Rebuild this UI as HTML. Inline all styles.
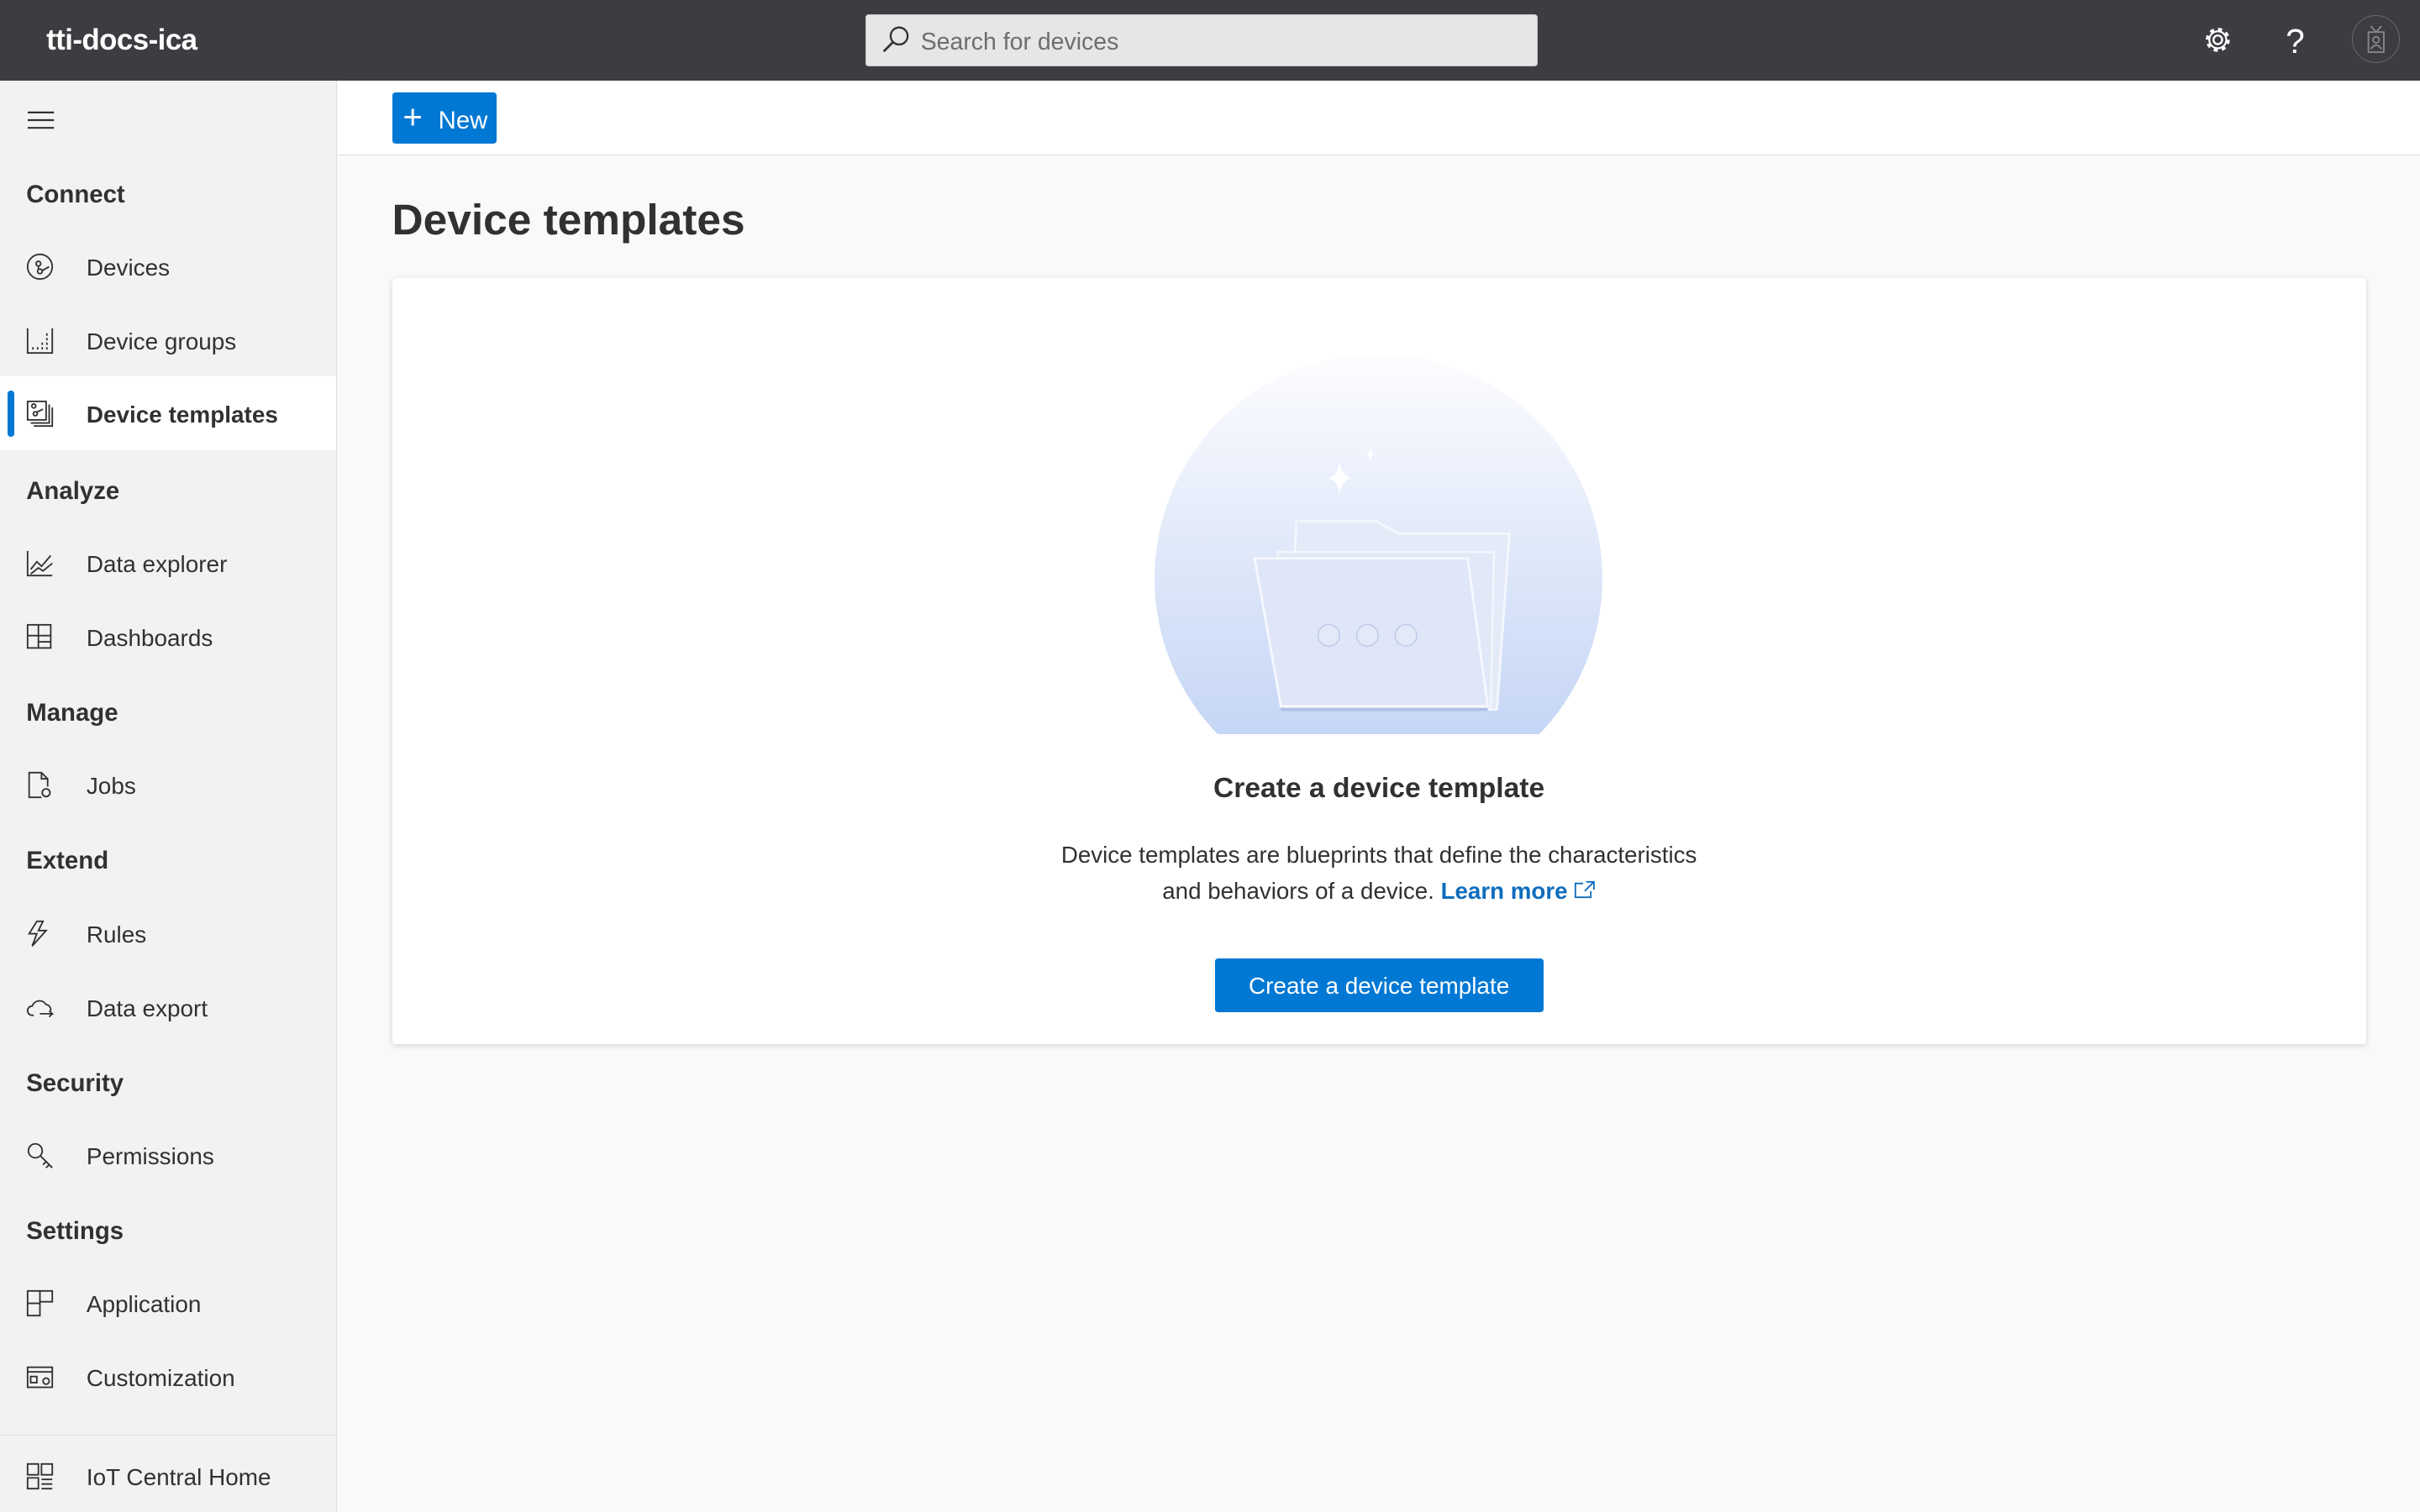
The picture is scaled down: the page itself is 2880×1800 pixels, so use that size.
<!DOCTYPE html>
<html><head><meta charset="utf-8"><style>
html,body{margin:0;padding:0;width:2880px;height:1800px;overflow:hidden;background:#faf9f8}
#w{zoom:1.836735;width:1568px;height:980px;position:relative;font-family:"Liberation Sans",sans-serif;color:#323130}
.top{position:absolute;left:0;top:0;width:1568px;height:52px;background:#3d3c41}
.brand{position:absolute;left:30px;top:15px;color:#fff;font-weight:bold;font-size:19px;letter-spacing:-0.3px}
.search{position:absolute;left:561px;top:9px;width:434px;height:33px;background:#e6e6e6;border:1px solid #c8c8c8;border-radius:2px}
.search span{position:absolute;left:35px;top:9px;color:#6e6e6e;font-size:15.5px}
.side{position:absolute;left:0;top:52px;width:218px;height:928px;background:#f3f2f1;border-right:1px solid #e1dfdd}
.item{position:absolute;left:0;width:218px;height:48px;font-size:15.2px}
.item .t{position:absolute;left:56px;top:16px}
.item svg{position:absolute;left:17px;top:15px}
.hd{position:absolute;left:17px;font-weight:bold;font-size:16px}
.sel{background:#fff}
.sel .t{font-weight:bold}
.bar{position:absolute;left:5px;top:9px;width:4px;height:30px;background:#0078d4;border-radius:2px}
.cmd{position:absolute;left:219px;top:52px;width:1349px;height:48px;background:#fff;border-bottom:1px solid #e1dfdd}
.btn{position:absolute;left:35px;top:8px;width:68px;height:33px;background:#0078d4;border-radius:2px;color:#fff;font-size:16px}
h1{position:absolute;left:254px;top:126px;margin:0;font-size:28px;font-weight:bold}
.card{position:absolute;left:254px;top:180px;width:1279px;height:497px;background:#fff;box-shadow:0 1px 4px rgba(0,0,0,.15);border-radius:2px}
.blue{position:absolute;left:787px;top:621px;width:213px;height:35px;background:#0078d4;border-radius:2px;color:#fff;font-size:15.2px;text-align:center;line-height:36px}
</style></head><body><div id="w">
<div class="top">
<div class="brand">tti-docs-ica</div>
<div class="search"><svg style="position:absolute;left:9px;top:7px" width="20" height="20" viewBox="0 0 20 20"><circle cx="12" cy="7" r="5.5" fill="none" stroke="#333" stroke-width="1.3"/><path d="M8 11L2 17" stroke="#333" stroke-width="1.5"/></svg><span>Search for devices</span></div>
<svg style="position:absolute;left:1427px;top:16px" width="20" height="20" viewBox="0 0 20 20"><circle cx="10" cy="10" r="2.8" fill="none" stroke="#fff" stroke-width="1.3"/><circle cx="10" cy="10" r="6.5" fill="none" stroke="#fff" stroke-width="2.6" stroke-dasharray="2.5 2.6"/><circle cx="10" cy="10" r="5.5" fill="none" stroke="#fff" stroke-width="1.2"/></svg>
<div style="position:absolute;left:1481px;top:14px;color:#fff;font-size:22px">?</div>
<div style="position:absolute;left:1524px;top:10px;width:30px;height:30px;border:1px solid #6a6a6e;border-radius:50%"></div>
<svg style="position:absolute;left:1532px;top:16px" width="16" height="20" viewBox="0 0 16 20"><rect x="2.5" y="5" width="10" height="13" fill="none" stroke="#888" stroke-width="1"/><circle cx="7.5" cy="10" r="2" fill="none" stroke="#888"/><path d="M4 16q3.5-5 7 0M4 1l3.5 4l3.5-4" fill="none" stroke="#888"/></svg>
</div>
<div class="side">
<svg style="position:absolute;left:18px;top:20px" width="18" height="12"><path d="M0 1H17M0 6H17M0 11H17" stroke="#323130" stroke-width="1.2"/></svg>
<div class="hd" style="top:65px">Connect</div>
<div class="item" style="top:97px"><svg width="18" height="18" viewBox="0 0 18 18" fill="none" stroke="#323130"><circle cx="9" cy="9" r="8"/><circle cx="8" cy="7" r="1.5"/><circle cx="9" cy="12" r="1.5"/><path d="M10.5 11.5L15 9M8 8.5v2"/></svg><span class="t">Devices</span></div>
<div class="item" style="top:145px"><svg width="18" height="18" viewBox="0 0 18 18" fill="none" stroke="#323130"><path d="M1 1v16h16V1"/><path d="M4 14h1M7 14h1M10 14h1M13 14h1M10 11h1M13 11h1M13 8h1M13 5h1" stroke-width="1.6"/></svg><span class="t">Device groups</span></div>
<div class="item sel" style="top:192px"><div class="bar"></div><svg width="18" height="18" viewBox="0 0 18 18" fill="none" stroke="#323130"><rect x="1" y="1" width="12" height="12"/><path d="M3 15h12V3M5 17h12V5"/><circle cx="5" cy="4" r="1.3"/><circle cx="6" cy="9" r="1.3"/><path d="M7 8l4-2"/></svg><span class="t">Device templates</span></div>
<div class="hd" style="top:257px">Analyze</div>
<div class="item" style="top:289px"><svg width="18" height="18" viewBox="0 0 18 18" fill="none" stroke="#323130"><path d="M1 1v16h16"/><path d="M3 13l4-5 3 3 6-7M3 16l5-4 3 2 6-5"/></svg><span class="t">Data explorer</span></div>
<div class="item" style="top:337px"><svg width="18" height="18" viewBox="0 0 18 18" fill="none" stroke="#323130"><rect x="1" y="1" width="15" height="15"/><path d="M8 1v15M1 8h15M8 12h8"/></svg><span class="t">Dashboards</span></div>
<div class="hd" style="top:401px">Manage</div>
<div class="item" style="top:433px"><svg width="18" height="18" viewBox="0 0 18 18" fill="none" stroke="#323130"><path d="M10 17H2V1h8l4 4v5M10 1v4h4"/><circle cx="13" cy="14" r="2.5"/></svg><span class="t">Jobs</span></div>
<div class="hd" style="top:497px">Extend</div>
<div class="item" style="top:529px"><svg width="18" height="18" viewBox="0 0 18 18" fill="none" stroke="#323130"><path d="M7 1L2 9h5l-3 8 9-10H8l3-6z"/></svg><span class="t">Rules</span></div>
<div class="item" style="top:577px"><svg width="18" height="18" viewBox="0 0 18 18" fill="none" stroke="#323130"><path d="M5 14H4a3 3 0 010-6 5 5 0 019-1 3.5 3.5 0 013 4M9 13h8l-2-2M17 13l-2 2"/></svg><span class="t">Data export</span></div>
<div class="hd" style="top:641px">Security</div>
<div class="item" style="top:673px"><svg width="18" height="18" viewBox="0 0 18 18" fill="none" stroke="#323130"><circle cx="6" cy="6" r="4.5"/><path d="M9 9l8 8M13 13l-2 2M15 15l-2 2"/></svg><span class="t">Permissions</span></div>
<div class="hd" style="top:737px">Settings</div>
<div class="item" style="top:769px"><svg width="18" height="18" viewBox="0 0 18 18" fill="none" stroke="#323130"><path d="M1 1h16v7H9v9H1zM9 1v7M1 9h8"/></svg><span class="t">Application</span></div>
<div class="item" style="top:817px"><svg width="18" height="18" viewBox="0 0 18 18" fill="none" stroke="#323130"><rect x="1" y="2" width="16" height="13"/><path d="M1 5h16"/><rect x="3" y="8" width="4" height="4"/><circle cx="13" cy="11" r="2"/></svg><span class="t">Customization</span></div>
<div style="position:absolute;left:0;top:878px;width:218px;border-top:1px solid #e1dfdd"></div>
<div class="item" style="top:881px"><svg width="18" height="18" viewBox="0 0 18 18" fill="none" stroke="#323130"><path d="M1 1h7v7H1zM1 10h7v7H1zM10 1h7v7h-7zM10 11h7M10 14h7M10 17h7"/></svg><span class="t">IoT Central Home</span></div>
</div>
<div class="cmd"><div class="btn"><span style="position:absolute;left:7px;top:3px;font-size:22px;font-weight:300">+</span><span style="position:absolute;left:30px;top:9px">New</span></div></div>
<h1>Device templates</h1>
<div class="card">
<div style="position:absolute;left:494px;top:50px;width:290px;height:246px;overflow:hidden"><div style="width:290px;height:290px;border-radius:50%;background:linear-gradient(#fdfdff,#dfe8f9 45%,#bccff4)"></div></div>
<svg style="position:absolute;left:554px;top:100px" width="180" height="190" viewBox="0 0 180 190">
<polygon points="32,58 84,58 98,66 170,66 162,180 26,180" fill="#e3eaf8" stroke="#f4f7fd" stroke-width="1.5"/>
<polygon points="20,78 160,78 158,180 26,180" fill="#e1e8f8" stroke="#f4f7fd" stroke-width="1.5" opacity=".9"/>
<polygon points="5,82 143,82 156,178 22,178" fill="#dfe6f7" stroke="#f6f8fe" stroke-width="1.5"/>
<path d="M22 180h134" stroke="#aebfe3" stroke-width="2"/>
<circle cx="53" cy="132" r="7" fill="#e3e9f7" stroke="#c3cfea"/><circle cx="78" cy="132" r="7" fill="#e3e9f7" stroke="#c3cfea"/><circle cx="103" cy="132" r="7" fill="#e3e9f7" stroke="#c3cfea"/>
<path d="M60 19q1 10 8 11q-7 1-8 11q-1-10-8-11q7-1 8-11z" fill="#fff"/>
<path d="M80 10q.5 4 3 4.5q-2.5.5-3 4.5q-.5-4-3-4.5q2.5-.5 3-4.5z" fill="#fff"/>
</svg>
<div style="position:absolute;left:0;width:1279px;top:321px;text-align:center;font-weight:bold;font-size:18.3px">Create a device template</div>
<div style="position:absolute;left:0;width:1279px;top:363px;text-align:center;font-size:15.1px;line-height:23px">Device templates are blueprints that define the characteristics<br>and behaviors of a device. <b style="color:#0f6cbd">Learn more</b> <svg width="14" height="12" viewBox="0 0 14 12" fill="none" stroke="#0f6cbd"><path d="M6 2H1v9h10V7M8 1h5v5M13 1L7 7"/></svg></div>
</div>
<div class="blue">Create a device template</div>
</div></body></html>
